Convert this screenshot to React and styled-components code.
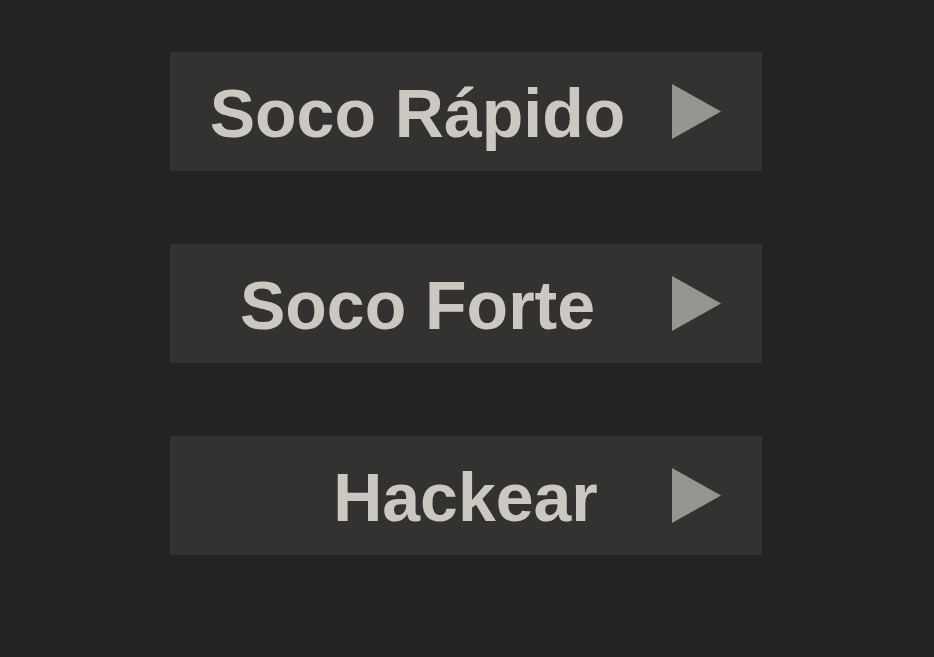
import styled, { createGlobalStyle } from 'styled-components'

const GlobalStyle = createGlobalStyle`
    html, body {
        margin: 0;
        padding: 0;
        background-color: #232323;
    }
    body {
        font-family: "Liberation Sans", Arial, sans-serif;
    }
`

const Menu = styled.div`
    display: flex;
    flex-direction: column;
    align-items: center;
    gap: 73px;
    padding-top: 52px;
    min-height: 657px;
    box-sizing: border-box;
`

const ActionButton = styled.button`
    display: flex;
    flex-direction: row;
    align-items: center;
    width: 592px;
    height: 119px;
    margin-right: 2px;
    padding: 0 41px 0 ${({ $shift }) => $shift || 0}px;
    box-sizing: border-box;
    border: none;
    background-color: #333230;
    cursor: pointer;
    gap: 7px;
`

const Label = styled.span`
    flex: 1;
    text-align: center;
    color: #cbc8c2;
    font-family: "Liberation Sans", Arial, sans-serif;
    font-weight: 700;
    font-size: 68px;
    line-height: 1;
    padding-top: 3px;
`

const Arrow = styled.svg`
    width: 49px;
    height: 55px;
    flex-shrink: 0;
`

function PlayArrow() {
    return (
        <Arrow viewBox="0 0 49 55">
            <polygon points="0,0 49,27.5 0,55" fill="#96958f" />
        </Arrow>
    )
}

const actions = [
    { label: 'Soco Rápido' },
    { label: 'Soco Forte' },
    { label: 'Hackear', shift: 96 },
]

export default function App() {
    return (
        <>
            <GlobalStyle />
            <Menu>
                {actions.map((a) => (
                    <ActionButton key={a.label} $shift={a.shift}>
                        <Label>{a.label}</Label>
                        <PlayArrow />
                    </ActionButton>
                ))}
            </Menu>
        </>
    )
}
